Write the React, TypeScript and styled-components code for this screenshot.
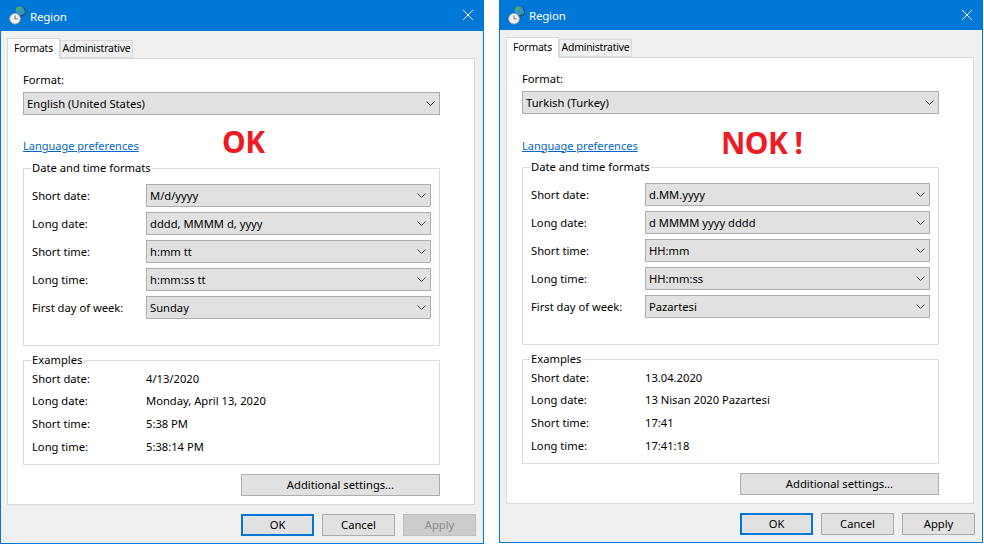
import React from 'react'
import styled, { createGlobalStyle } from 'styled-components'

const GlobalStyle = createGlobalStyle`
  html, body {
    margin: 0;
    padding: 0;
    background: #fff;
  }
  body {
    font-family: 'Noto Sans', 'Open Sans', sans-serif;
    font-size: 11.2px;
    color: #000;
  }
`

type WindowData = {
  format: string
  stamp: string
  stampLift: number
  titleHeight: number
  applyDisabled: boolean
  formats: [string, string][]
  examples: [string, string][]
}

const windows: WindowData[] = [
  {
    format: 'English (United States)',
    stamp: 'OK',
    stampLift: 8,
    titleHeight: 30,
    applyDisabled: true,
    formats: [
      ['Short date:', 'M/d/yyyy'],
      ['Long date:', 'dddd, MMMM d, yyyy'],
      ['Short time:', 'h:mm tt'],
      ['Long time:', 'h:mm:ss tt'],
      ['First day of week:', 'Sunday'],
    ],
    examples: [
      ['Short date:', '4/13/2020'],
      ['Long date:', 'Monday, April 13, 2020'],
      ['Short time:', '5:38 PM'],
      ['Long time:', '5:38:14 PM'],
    ],
  },
  {
    format: 'Turkish (Turkey)',
    stamp: 'NOK !',
    stampLift: 5,
    titleHeight: 29,
    applyDisabled: false,
    formats: [
      ['Short date:', 'd.MM.yyyy'],
      ['Long date:', 'd MMMM yyyy dddd'],
      ['Short time:', 'HH:mm'],
      ['Long time:', 'HH:mm:ss'],
      ['First day of week:', 'Pazartesi'],
    ],
    examples: [
      ['Short date:', '13.04.2020'],
      ['Long date:', '13 Nisan 2020 Pazartesi'],
      ['Short time:', '17:41'],
      ['Long time:', '17:41:18'],
    ],
  },
]

const RegionIcon = () => (
  <svg width="17" height="20" viewBox="0 0 17 20">
    <circle cx="11.500" cy="5.500" r="5.500" fill="#17508f" />
    <circle cx="10.800" cy="4.800" r="4.500" fill="#2f93dc" />
    <path d="M8 1.200c1.800-.8 3.800-.6 5 .3l-1 1.800-2 .3-.6 1.800-1.800-.5-.5-2z" fill="#56b04a" />
    <path d="M13.500 5l2.300-.8c.3 1.700-.1 3.200-1 4.300l-1.500-1.300z" fill="#4aa24e" />
    <circle cx="6" cy="12.700" r="5.300" fill="#f0f1ef" stroke="#a3a7a5" strokeWidth="1" />
    <path d="M6 9.500v3.400h2.500" fill="none" stroke="#6a6f6e" strokeWidth="1" />
  </svg>
)

const CloseIcon = () => (
  <svg width="12" height="12" viewBox="0 0 12 12">
    <path d="M1 1l10 10M11 1L1 11" stroke="#fff" strokeWidth="1" fill="none" />
  </svg>
)

const Chevron = () => (
  <svg width="9" height="5" viewBox="0 0 9 5">
    <path d="M.5.500l4 4 4-4" stroke="#444" strokeWidth="1" fill="none" />
  </svg>
)

const Region = ({ data }: { data: WindowData }) => (
  <Window>
    <TitleBar $height={data.titleHeight}>
      <RegionIcon />
      <TitleText>Region</TitleText>
      <CloseBox>
        <CloseIcon />
      </CloseBox>
    </TitleBar>
    <Tabs>
      <Tab $active>Formats</Tab>
      <Tab>Administrative</Tab>
    </Tabs>
    <Panel>
      <FieldLabel>Format:</FieldLabel>
      <Dropdown>
        <span>{data.format}</span>
        <Chevron />
      </Dropdown>
      <LinkRow>
        <PrefLink href="#">Language preferences</PrefLink>
        <Stamp $lift={data.stampLift}>{data.stamp}</Stamp>
      </LinkRow>
      <Group>
        <Legend>Date and time formats</Legend>
        <FormatRows>
          {data.formats.map(([label, value]) => (
            <FormatRow key={label}>
              <span>{label}</span>
              <Dropdown>
                <span>{value}</span>
                <Chevron />
              </Dropdown>
            </FormatRow>
          ))}
        </FormatRows>
      </Group>
      <ExamplesGroup>
        <Legend>Examples</Legend>
        {data.examples.map(([label, value]) => (
          <ExampleRow key={label}>
            <span>{label}</span>
            <span>{value}</span>
          </ExampleRow>
        ))}
      </ExamplesGroup>
      <AdditionalRow>
        <Button $width={199}>Additional settings...</Button>
      </AdditionalRow>
    </Panel>
    <Footer>
      <Button $width={73} $primary>OK</Button>
      <Button $width={73}>Cancel</Button>
      <Button $width={73} $disabled={data.applyDisabled}>Apply</Button>
    </Footer>
  </Window>
)

export default function App() {
  return (
    <Page>
      <GlobalStyle />
      {windows.map(w => (
        <Region key={w.stamp} data={w} />
      ))}
    </Page>
  )
}

const Page = styled.div`
  display: flex;
  gap: 15px;
  width: 984px;
  height: 544px;
  overflow: hidden;
  align-items: flex-start;
`

const Window = styled.div`
  box-sizing: border-box;
  width: 484px;
  flex: none;
  background: #f0f0f0;
  border: 1px solid #0078d7;
  padding-bottom: 7px;
`

const TitleBar = styled.div<{ $height: number }>`
  display: flex;
  align-items: center;
  height: ${p => p.$height}px;
  padding-left: 8px;
  background: #0078d7;
  color: #fff;
`

const TitleText = styled.span`
  margin-left: 4px;
  font-size: 11.5px;
  letter-spacing: -0.2px;
`

const CloseBox = styled.div`
  display: flex;
  margin-left: auto;
  margin-right: 9px;
  padding-bottom: 2px;
`

const Tabs = styled.div`
  display: flex;
  align-items: flex-end;
  height: 21px;
  margin-top: 6px;
  padding-left: 6px;
  position: relative;
  z-index: 1;
`

const Tab = styled.div<{ $active?: boolean }>`
  box-sizing: border-box;
  display: flex;
  align-items: center;
  justify-content: center;
  height: ${p => (p.$active ? 21 : 18)}px;
  width: ${p => (p.$active ? 53 : 73)}px;
  margin-bottom: ${p => (p.$active ? -1 : 0)}px;
  padding-bottom: 2px;
  background: ${p => (p.$active ? '#fff' : '#f0f0f0')};
  border: 1px solid #d9d9d9;
  border-bottom: ${p => (p.$active ? 'none' : '1px solid #d9d9d9')};
  font-size: 10.4px;
  letter-spacing: -0.2px;
`

const Panel = styled.div`
  box-sizing: border-box;
  display: flex;
  flex-direction: column;
  width: 468px;
  height: 447px;
  margin-left: 6px;
  padding: 14px 34px 0 15px;
  background: #fff;
  border: 1px solid #d9d9d9;
`

const FieldLabel = styled.div`
  height: 19px;
  line-height: 14px;
`

const Dropdown = styled.div`
  box-sizing: border-box;
  display: flex;
  align-items: center;
  justify-content: space-between;
  height: 23px;
  padding: 0 3px;
  background: #e1e1e1;
  border: 1px solid #adadad;

  svg {
    margin-right: 1px;
  }
`

const LinkRow = styled.div`
  display: grid;
  grid-template-columns: 199px auto;
  align-items: center;
  height: 24px;
  margin: 19px 0 2px;
`

const PrefLink = styled.a`
  padding-bottom: 1px;
  color: #0066cc;
  font-size: 11px;
  text-decoration: underline;
  white-space: nowrap;
`

const Stamp = styled.div<{ $lift: number }>`
  margin-top: -${p => p.$lift}px;
  color: #ed1c24;
  font-size: 30px;
  font-weight: 700;
  line-height: 30px;
  letter-spacing: -0.6px;
  white-space: nowrap;
`

const Group = styled.fieldset`
  box-sizing: border-box;
  display: block;
  height: 186px;
  min-width: 0;
  margin: 0;
  padding: 8px 8px 0;
  border: 1px solid #dcdcdc;
`

const ExamplesGroup = styled(Group)`
  height: 113px;
  margin-top: 6px;
  padding-top: 0;
`

const Legend = styled.legend`
  height: 16px;
  line-height: 16px;
  margin-left: -1px;
  padding: 0 1px;
`

const FormatRows = styled.div`
  display: flex;
  flex-direction: column;
  gap: 5px;
`

const FormatRow = styled.div`
  display: grid;
  grid-template-columns: 114px 1fr;
  align-items: center;
`

const ExampleRow = styled.div`
  display: grid;
  grid-template-columns: 114px 1fr;
  height: 22.6px;
  margin-top: -1px;
  margin-bottom: 1px;
  align-items: center;
`

const AdditionalRow = styled.div`
  display: flex;
  justify-content: flex-end;
  margin-top: 9px;
`

const Footer = styled.div`
  display: flex;
  justify-content: flex-end;
  gap: 8px;
  margin-top: 9px;
  padding-right: 7px;
`

const Button = styled.div<{ $width: number; $primary?: boolean; $disabled?: boolean }>`
  box-sizing: border-box;
  display: flex;
  align-items: center;
  justify-content: center;
  width: ${p => p.$width}px;
  height: 22px;
  padding-bottom: 1px;
  background: ${p => (p.$disabled ? '#cccccc' : '#e1e1e1')};
  border: ${p => (p.$primary ? '2px solid #0078d7' : p.$disabled ? '1px solid #bfbfbf' : '1px solid #adadad')};
  color: ${p => (p.$disabled ? '#8c8c8c' : '#000')};
`
